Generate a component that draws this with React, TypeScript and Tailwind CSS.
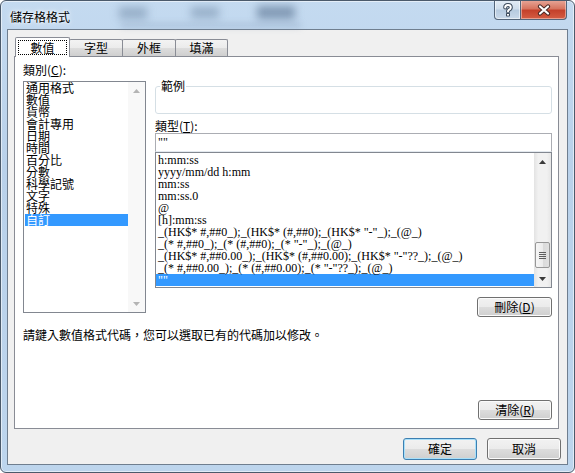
import clsx from "clsx";

const cjk = "font-['Noto_Sans_CJK_TC','Noto_Sans_CJK_SC',sans-serif]";
const serif = "font-['Liberation_Serif','Noto_Sans_CJK_TC',serif]";

const categories = [
  "通用格式",
  "數值",
  "貨幣",
  "會計專用",
  "日期",
  "時間",
  "百分比",
  "分數",
  "科學記號",
  "文字",
  "特殊",
  "自訂",
];

const formatCodes = [
  "h:mm:ss",
  "yyyy/mm/dd h:mm",
  "mm:ss",
  "mm:ss.0",
  "@",
  "[h]:mm:ss",
  '_(HK$* #,##0_);_(HK$* (#,##0);_(HK$* "-"_);_(@_)',
  '_(* #,##0_);_(* (#,##0);_(* "-"_);_(@_)',
  '_(HK$* #,##0.00_);_(HK$* (#,##0.00);_(HK$* "-"??_);_(@_)',
  '_(* #,##0.00_);_(* (#,##0.00);_(* "-"??_);_(@_)',
  '""',
];

const tabs = [
  { label: "數值", width: "w-[55px]" },
  { label: "字型", width: "w-[54px]" },
  { label: "外框", width: "w-[54px]" },
  { label: "填滿", width: "w-[53px]" },
];

function Arrow({ up, className }: { up?: boolean; className: string }) {
  return (
    <svg width="7" height="4" viewBox="0 0 7 4" className={className}>
      <path d={up ? "M0 4L3.5 0L7 4Z" : "M0 0L7 0L3.5 4Z"} fill="currentColor" />
    </svg>
  );
}

function WinButton({
  children,
  isDefault,
  className,
}: {
  children: React.ReactNode;
  isDefault?: boolean;
  className?: string;
}) {
  return (
    <button
      type="button"
      className={clsx(
        "flex items-center justify-center rounded-[3px] border text-[12px] leading-[14px] text-black bg-[linear-gradient(180deg,#f2f2f2_0%,#ebebeb_50%,#dddddd_50%,#cfcfcf_100%)]",
        isDefault
          ? "border-[#3c7fb1] shadow-[inset_0_0_0_1px_#a8e0fa]"
          : "border-[#707070] shadow-[inset_0_0_0_1px_#fbfbfb]",
        className
      )}
    >
      {children}
    </button>
  );
}

function TitleBar() {
  return (
    <div className="relative flex h-[28px]">
      <div className="absolute left-[118px] top-[6px] h-[12px] w-[28px] bg-[#55708f]/40 blur-[4px]" />
      <div className="absolute left-[190px] top-[6px] h-[11px] w-[28px] bg-[#55708f]/40 blur-[4px]" />
      <div className="absolute left-[256px] top-[5px] h-[13px] w-[38px] bg-[#3f5a7a]/50 blur-[4px]" />
      <div className="absolute left-[120px] top-[22px] h-[5px] w-[180px] bg-[#6a85a3]/25 blur-[3px]" />
      <span className="relative pl-[9px] pt-[9px] text-[12px] leading-[14px] text-black [text-shadow:0_0_6px_#ffffff,0_0_3px_#ffffff]">
        儲存格格式
      </span>
      <div className="relative -mt-px ml-auto mr-[7px] flex h-[20px]">
        <div className="flex w-[27px] items-center justify-center rounded-bl-[4px] border border-t-0 border-[#53657a] bg-[linear-gradient(180deg,#e4edf6_0%,#d0deec_45%,#b7cbe0_55%,#c9d9ea_100%)] shadow-[inset_0_0_0_1px_rgba(255,255,255,0.55)]">
          <svg width="12" height="14" viewBox="0 0 12 14">
            <path
              d="M3.2 4.6Q3.2 2 6 2Q8.8 2 8.8 4.4Q8.8 6 6.6 7Q6 7.4 6 8.6"
              fill="none"
              stroke="#3d4b5c"
              strokeWidth="4"
              strokeLinecap="round"
            />
            <path
              d="M3.2 4.6Q3.2 2 6 2Q8.8 2 8.8 4.4Q8.8 6 6.6 7Q6 7.4 6 8.6"
              fill="none"
              stroke="#ffffff"
              strokeWidth="2"
              strokeLinecap="round"
            />
            <rect x="4" y="10" width="4" height="3.5" rx="0.8" fill="#3d4b5c" />
            <rect x="5" y="11" width="2" height="1.6" fill="#ffffff" />
          </svg>
        </div>
        <div className="flex w-[46px] items-center justify-center rounded-br-[4px] border border-l-0 border-t-0 border-[#53657a] bg-[linear-gradient(180deg,#e8a89a_0%,#d77560_45%,#c4412b_55%,#d45d43_100%)] shadow-[inset_0_0_0_1px_rgba(255,240,235,0.45)]">
          <svg width="14" height="12" viewBox="0 0 14 12">
            <path d="M3 2.5L11 9.5M11 2.5L3 9.5" stroke="#4a2a26" strokeWidth="4.2" strokeLinecap="round" />
            <path d="M3 2.5L11 9.5M11 2.5L3 9.5" stroke="#ffffff" strokeWidth="2.2" strokeLinecap="round" />
          </svg>
        </div>
      </div>
    </div>
  );
}

function CategoryList() {
  return (
    <div className="flex h-[232px] w-[123px] border border-[#828790] bg-white">
      <div className="flex-1 pl-[1px]">
        {categories.map((name) => (
          <div
            key={name}
            className={clsx(
              "h-[12px] pl-[1px] text-[12px] leading-[12px] whitespace-nowrap",
              name === "自訂" && "bg-[#3399ff] text-white"
            )}
          >
            {name}
          </div>
        ))}
      </div>
      <div className="flex w-[17px] flex-col bg-[#f8f8f8]">
        <div className="flex h-[17px] items-center justify-center">
          <Arrow up className="text-[#b4b4b4]" />
        </div>
        <div className="flex-1" />
        <div className="flex h-[17px] items-center justify-center">
          <Arrow className="text-[#b4b4b4]" />
        </div>
      </div>
    </div>
  );
}

function FormatList() {
  return (
    <div className="flex h-[136px] border border-[#828790] bg-white">
      <div className="flex-1 pt-px">
        {formatCodes.map((code, i) => (
          <div
            key={i}
            className={clsx(
              "h-[12px] pl-[2px] text-[12px] leading-[12px] whitespace-pre",
              serif,
              i === formatCodes.length - 1 && "bg-[#3399ff] text-white"
            )}
          >
            {code}
          </div>
        ))}
      </div>
      <div className="flex w-[17px] flex-col bg-[linear-gradient(90deg,#e3e3e3_0%,#f1f1f1_25%,#f1f1f1_75%,#e6e6e6_100%)]">
        <div className="flex h-[17px] items-center justify-center">
          <Arrow up className="text-[#3a3a3a]" />
        </div>
        <div className="flex flex-1 flex-col items-center">
          <div className="flex-1" />
          <div className="mb-[2px] flex h-[26px] w-[15px] flex-col items-center justify-center gap-[1px] rounded-[2px] border border-[#979797] bg-[linear-gradient(90deg,#f6f6f6_0%,#ececec_50%,#dadada_51%,#e0e0e0_100%)]">
            <div className="h-px w-[7px] bg-[#5e5e5e]" />
            <div className="h-px w-[7px] bg-[#5e5e5e]" />
            <div className="h-px w-[7px] bg-[#5e5e5e]" />
            <div className="h-px w-[7px] bg-[#5e5e5e]" />
          </div>
        </div>
        <div className="flex h-[17px] items-center justify-center">
          <Arrow className="text-[#3a3a3a]" />
        </div>
      </div>
    </div>
  );
}

export default function App() {
  return (
    <div className="h-[473px] w-[575px] bg-white">
      <div
        className={clsx(
          "h-[473px] w-[575px] overflow-hidden rounded-[6px] border border-[#4b5a6b] bg-[linear-gradient(180deg,#c4daf0_0%,#b9d1ea_35%,#bdd5ed_100%)] text-black shadow-[inset_0_0_0_1px_rgba(255,255,255,0.55)]",
          cjk
        )}
      >
        <TitleBar />

        <div className="mx-[6px] flex h-[436px] flex-col border border-[#6f7e8f] bg-[#f0f0f0]">
          {/* tabs */}
          <div className="relative z-10 ml-[7px] mt-[7px] flex h-[19px] items-end">
            {tabs.map((tab, i) =>
              i === 0 ? (
                <div
                  key={tab.label}
                  className={clsx(
                    "-mb-px flex h-[20px] justify-center rounded-t-[2px] border border-b-0 border-[#898c95] bg-white pt-[2px]",
                    tab.width
                  )}
                >
                  <span className="h-[15px] border border-dotted border-black px-[11px] text-[12px] leading-[13px]">
                    {tab.label}
                  </span>
                </div>
              ) : (
                <div
                  key={tab.label}
                  className={clsx(
                    "-ml-px flex h-[17px] items-center justify-center rounded-t-[2px] border border-b-0 border-[#898c95] bg-[linear-gradient(180deg,#f3f3f3_0%,#ebebeb_50%,#dddddd_50%,#cfcfcf_100%)] text-[12px] leading-[14px]",
                    tab.width
                  )}
                >
                  {tab.label}
                </div>
              )
            )}
          </div>

          {/* tab panel */}
          <div className="ml-[6px] flex h-[373px] w-[545px] flex-col border border-[#898c95] bg-white pb-[8px] pl-[8px] pr-[6px] pt-[6px]">
            <div className="flex">
              <div className="flex w-[123px] flex-col">
                <div className="mb-[4px] h-[14px] text-[12px] leading-[14px]">
                  類別(<u>C</u>):
                </div>
                <CategoryList />
              </div>

              <div className="ml-[9px] flex w-[397px] flex-col">
                <fieldset className="mt-[16px] h-[35px] rounded-[3px] border border-[#d5dfe5] px-[4px]">
                  <legend className="px-[1px] text-[12px] leading-[14px]">範例</legend>
                </fieldset>
                <div className="mt-[5px] h-[14px] text-[12px] leading-[14px]">
                  類型(<u>T</u>):
                </div>
                <div
                  className={clsx(
                    "h-[19px] border border-[#abadb3] border-b-[#e3e9ef] bg-white pl-[2px] pt-[2px] text-[12px] leading-[12px]",
                    serif
                  )}
                >
                  ""
                </div>
                <FormatList />
                <WinButton className="mt-[9px] h-[20px] w-[75px] self-end">
                  刪除(<u>D</u>)
                </WinButton>
              </div>
            </div>

            <p className="mt-[11px] h-[14px] text-[12px] leading-[14px]">
              請鍵入數值格式代碼，您可以選取已有的代碼加以修改。
            </p>

            <WinButton className="mt-auto h-[20px] w-[74px] self-end">
              清除(<u>R</u>)
            </WinButton>
          </div>

          {/* dialog buttons */}
          <div className="mt-[9px] flex justify-end gap-[10px] pr-[6px]">
            <WinButton isDefault className="h-[22px] w-[74px]">
              確定
            </WinButton>
            <WinButton className="h-[22px] w-[74px]">取消</WinButton>
          </div>
        </div>
      </div>
    </div>
  );
}
